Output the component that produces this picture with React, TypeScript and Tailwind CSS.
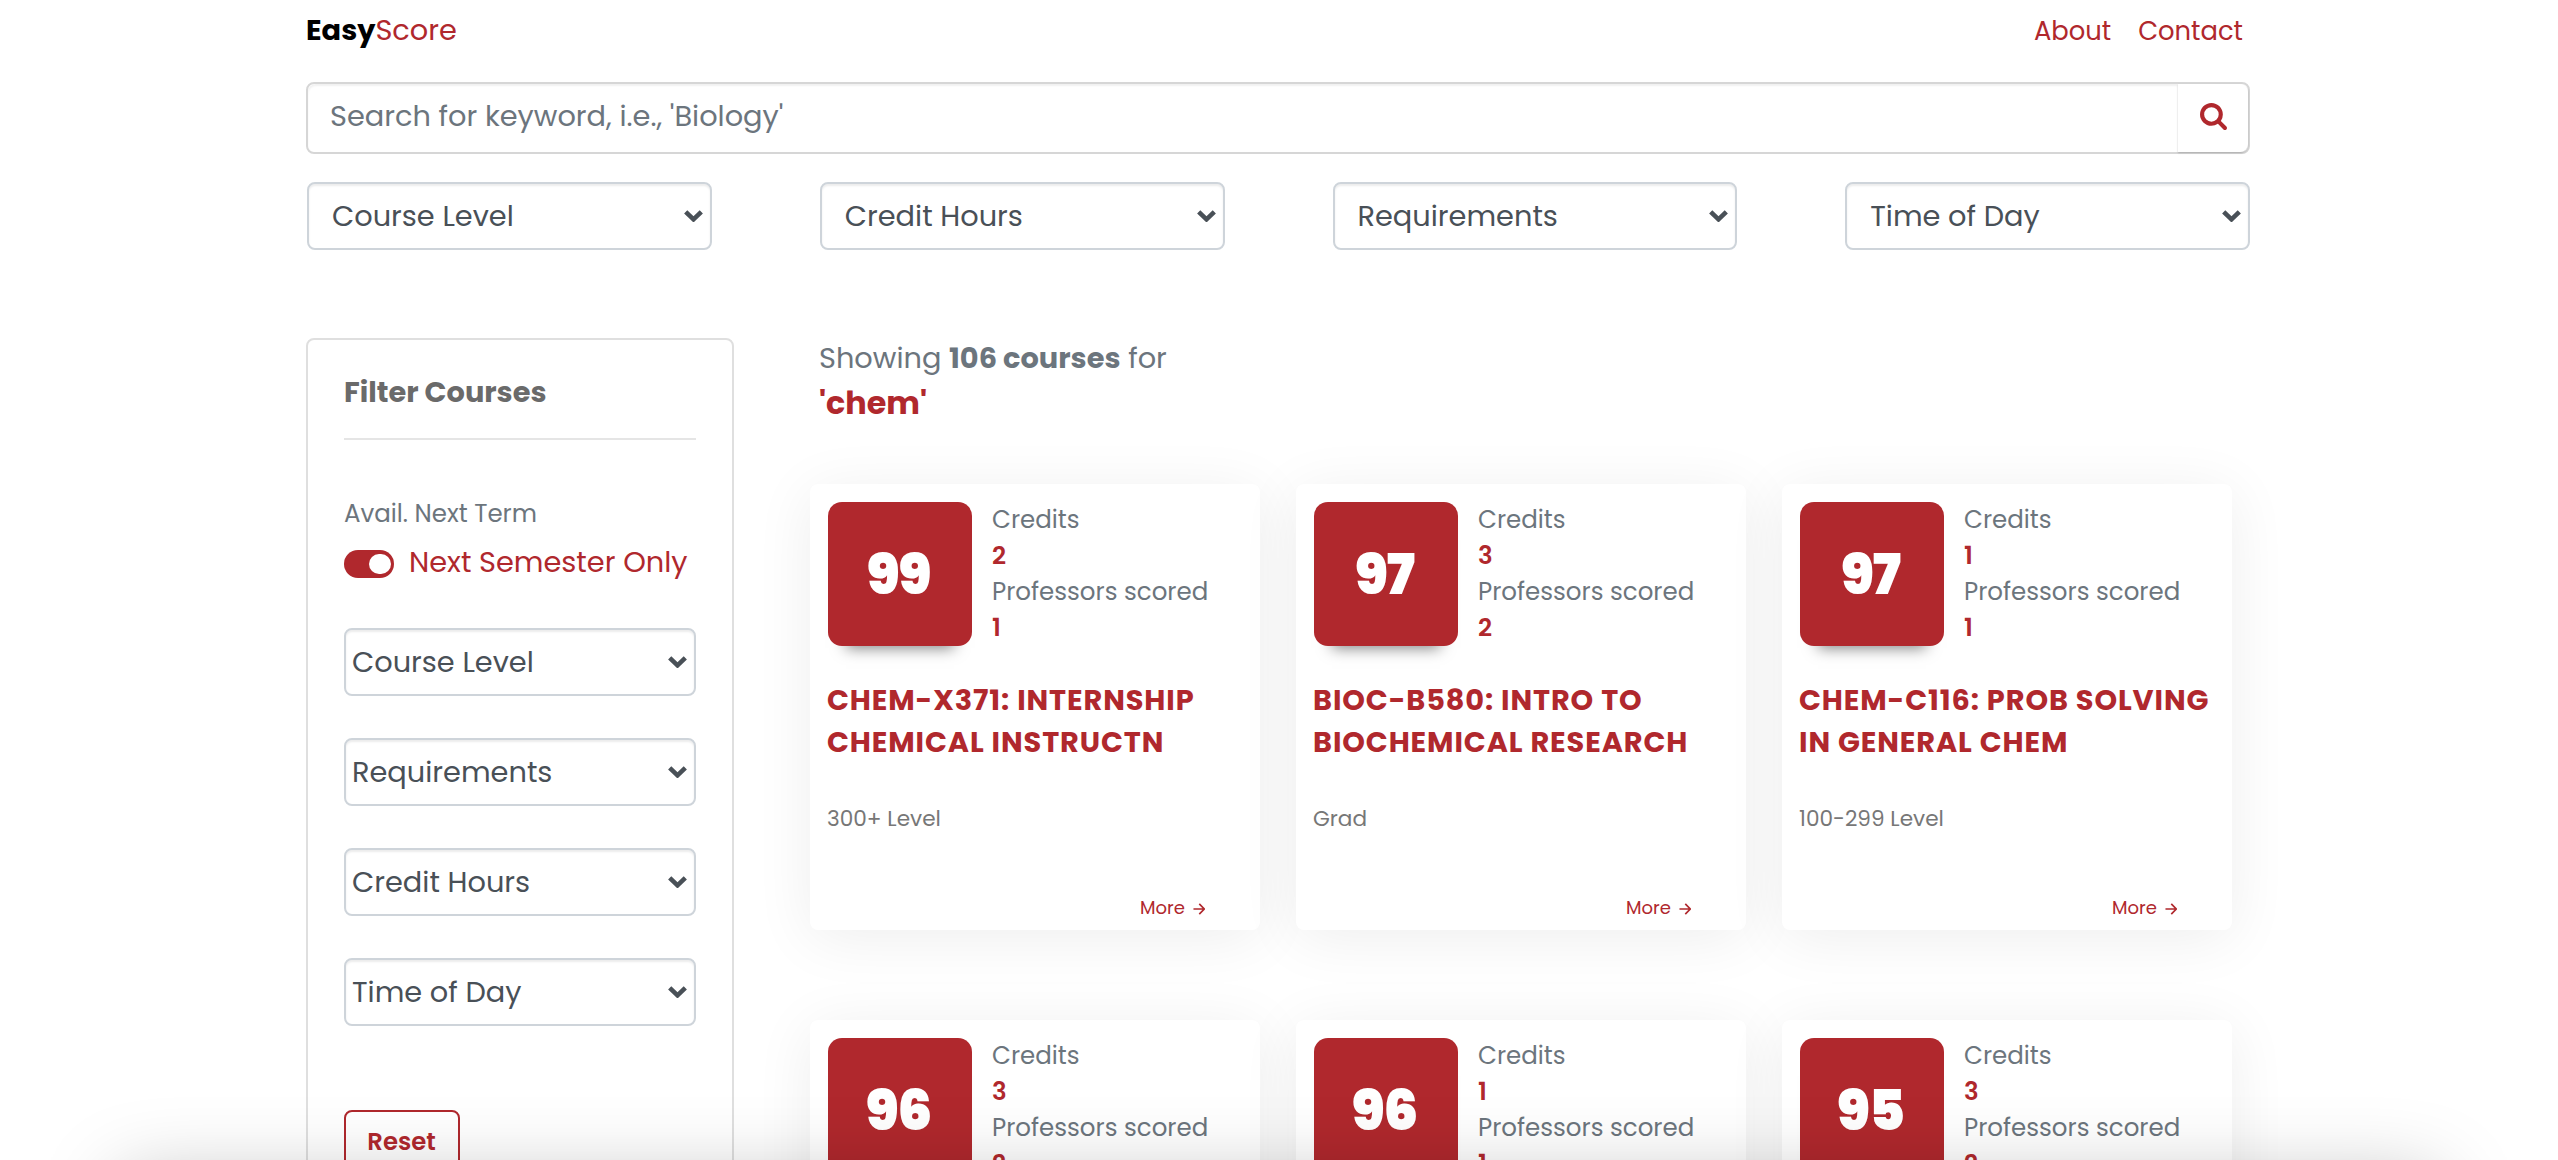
type Course = {
  score: number;
  credits: number;
  professors: number;
  title: string[];
  level: string;
};

const courses: Course[] = [
  {
    score: 99,
    credits: 2,
    professors: 1,
    title: ["CHEM-X371: INTERNSHIP", "CHEMICAL INSTRUCTN"],
    level: "300+ Level",
  },
  {
    score: 97,
    credits: 3,
    professors: 2,
    title: ["BIOC-B580: INTRO TO", "BIOCHEMICAL RESEARCH"],
    level: "Grad",
  },
  {
    score: 97,
    credits: 1,
    professors: 1,
    title: ["CHEM-C116: PROB SOLVING", "IN GENERAL CHEM"],
    level: "100-299 Level",
  },
  { score: 96, credits: 3, professors: 2, title: [], level: "" },
  { score: 96, credits: 1, professors: 1, title: [], level: "" },
  { score: 95, credits: 3, professors: 2, title: [], level: "" },
];

function Select({ label, padding }: { label: string; padding: string }) {
  return (
    <button
      className={`flex h-[68px] w-full items-center justify-between rounded-lg border-2 border-[#ced4da] bg-white pr-[7px] text-[28.8px] text-[#495057] shadow-[inset_0_2px_2px_rgba(0,0,0,0.075)] ${padding}`}
    >
      <span className="pt-0.5 whitespace-nowrap">{label}</span>
      <svg className="h-3 w-[19px]" viewBox="0 0 19 12" fill="none">
        <path d="M1.7 1.8 9.5 9.3 17.3 1.8" stroke="#495057" strokeWidth="4.6" />
      </svg>
    </button>
  );
}

function CourseCard({ course }: { course: Course }) {
  return (
    <article className="h-[446px] rounded-lg bg-white px-[18px] pt-[18px] shadow-[0_8px_60px_rgba(0,0,0,0.07)]">
      <div className="flex">
        <div className="flex size-36 items-center justify-center rounded-[14px] bg-[#b0282d] pr-[3px] shadow-[0_20px_14px_-18px_rgba(0,0,0,0.5)]">
          <span className="text-[55px] leading-none font-black tracking-[-1px] text-white">
            {course.score}
          </span>
        </div>
        <div className="ml-5 text-[24.5px] leading-9 text-[#6c757d]">
          <p>Credits</p>
          <p className="font-semibold text-[#b0282d]">{course.credits}</p>
          <p className="whitespace-nowrap">Professors scored</p>
          <p className="font-semibold text-[#b0282d]">{course.professors}</p>
        </div>
      </div>
      {course.title.length > 0 && (
        <>
          <h2 className="mt-[33px] -ml-px text-[28.8px] leading-[42px] font-bold tracking-[0.9px] text-[#b0282d]">
            {course.title.map((line) => (
              <span key={line} className="block whitespace-nowrap">
                {line}
              </span>
            ))}
          </h2>
          <p className="mt-[38px] -ml-px text-[21.6px] leading-9 text-[#777]">{course.level}</p>
          <a className="mt-[57px] flex items-center justify-end gap-2 pr-[37px] text-lg leading-7 text-[#b0282d]">
            More
            <svg className="mt-0.5 size-3" viewBox="0 0 13 13" fill="none">
              <path d="M0.5 6.5H12M6.8 1l5.4 5.5L6.8 12" stroke="#b0282d" strokeWidth="1.8" />
            </svg>
          </a>
        </>
      )}
    </article>
  );
}

export default function App() {
  return (
    <div className="relative h-[1160px] overflow-hidden bg-white font-['Poppins','Inter',sans-serif]">
      <div className="ml-[306px] w-[1944px]">
        <header className="flex h-[60px] items-center justify-between pr-[7px]">
          <div className="flex text-[28.8px] leading-10 text-[#b0282d]">
            <span className="font-bold text-black">Easy</span>
            <span>Score</span>
          </div>
          <nav className="flex gap-[27px] pt-px text-[25.8px] leading-10 text-[#b0282d]">
            <a>About</a>
            <a>Contact</a>
          </nav>
        </header>

        <div className="mt-[22px] flex h-[72px] rounded-lg border-2 border-[#d6d6d6]">
          <div className="flex flex-1 items-center rounded-l-lg pb-[3px] pl-[22px] text-[28.8px] text-[#6c757d] shadow-[inset_0_2px_2px_rgba(0,0,0,0.06)]">
            Search for keyword, i.e., 'Biology'
          </div>
          <button className="flex w-[70px] items-center justify-center rounded-r-lg pb-[3px] shadow-[0_1px_2px_rgba(0,0,0,0.2)]">
            <svg className="size-[27px]" viewBox="0 128 1664 1664" fill="#b0282d">
              <path d="M1152 832q0-185-131.5-316.5t-316.5-131.5-316.5 131.5-131.5 316.5 131.5 316.5 316.5 131.5 316.5-131.5 131.5-316.5zm512 832q0 52-38 90t-90 38q-54 0-90-38l-343-342q-179 124-399 124-143 0-273.5-55.5t-225-150-150-225-55.5-273.5 55.5-273.5 150-225 225-150 273.5-55.5 273.5 55.5 225 150 150 225 55.5 273.5q0 220-124 399l343 343q37 37 37 90z" />
            </svg>
          </button>
        </div>

        <div className="mt-7 ml-px grid grid-cols-4 gap-[108px]">
          <Select label="Course Level" padding="pl-[23px]" />
          <Select label="Credit Hours" padding="pl-[23px]" />
          <Select label="Requirements" padding="pl-[23px]" />
          <Select label="Time of Day" padding="pl-[23px]" />
        </div>

        <main className="mt-[86px] flex items-start">
          <aside className="mt-0.5 h-[900px] w-[428px] shrink-0 rounded-lg border-2 border-[#dfdfdf] px-9 pt-[30px]">
            <h2 className="text-[28.8px] leading-[44px] font-bold text-[#6a6a6a]">
              Filter Courses
            </h2>
            <hr className="mt-6 border-t-2 border-[#e5e5e5]" />
            <p className="mt-[56px] text-[24.5px] leading-9 text-[#6c757d]">Avail. Next Term</p>
            <div className="mt-2 flex h-11 items-center gap-[15px]">
              <span className="mt-[3px] flex h-7 w-[50px] items-center justify-end rounded-full bg-[#b0282d] pr-[3px]">
                <span className="h-5 w-[22px] rounded-full bg-white" />
              </span>
              <span className="text-[28.8px] leading-[44px] whitespace-nowrap text-[#b0282d]">
                Next Semester Only
              </span>
            </div>
            <div className="mt-[44px] flex flex-col gap-[42px]">
              <Select label="Course Level" padding="pl-1.5" />
              <Select label="Requirements" padding="pl-1.5" />
              <Select label="Credit Hours" padding="pl-1.5" />
              <Select label="Time of Day" padding="pl-1.5" />
            </div>
            <button className="mt-[84px] h-16 w-[116px] rounded-lg border-2 border-[#b0282d] pr-px text-[24.4px] font-semibold text-[#b0282d]">
              Reset
            </button>
          </aside>

          <section className="ml-[76px]">
            <div className="pl-[9px] text-[28.8px] leading-[44px] text-[#6c757d]">
              <p className="whitespace-nowrap">
                Showing <b>106 courses</b> for
              </p>
              <p className="pt-px text-[31.8px] leading-[44px] font-bold text-[#b0282d]">'chem'</p>
            </div>
            <div className="mt-[59px] grid grid-cols-[repeat(3,450px)] gap-x-9 gap-y-[90px]">
              {courses.map((course, i) => (
                <CourseCard key={i} course={course} />
              ))}
            </div>
          </section>
        </main>
      </div>

      <div className="pointer-events-none absolute top-[1180px] right-[120px] left-[120px] h-40 shadow-[0_0_80px_rgba(0,0,0,0.26)]" />
    </div>
  );
}
